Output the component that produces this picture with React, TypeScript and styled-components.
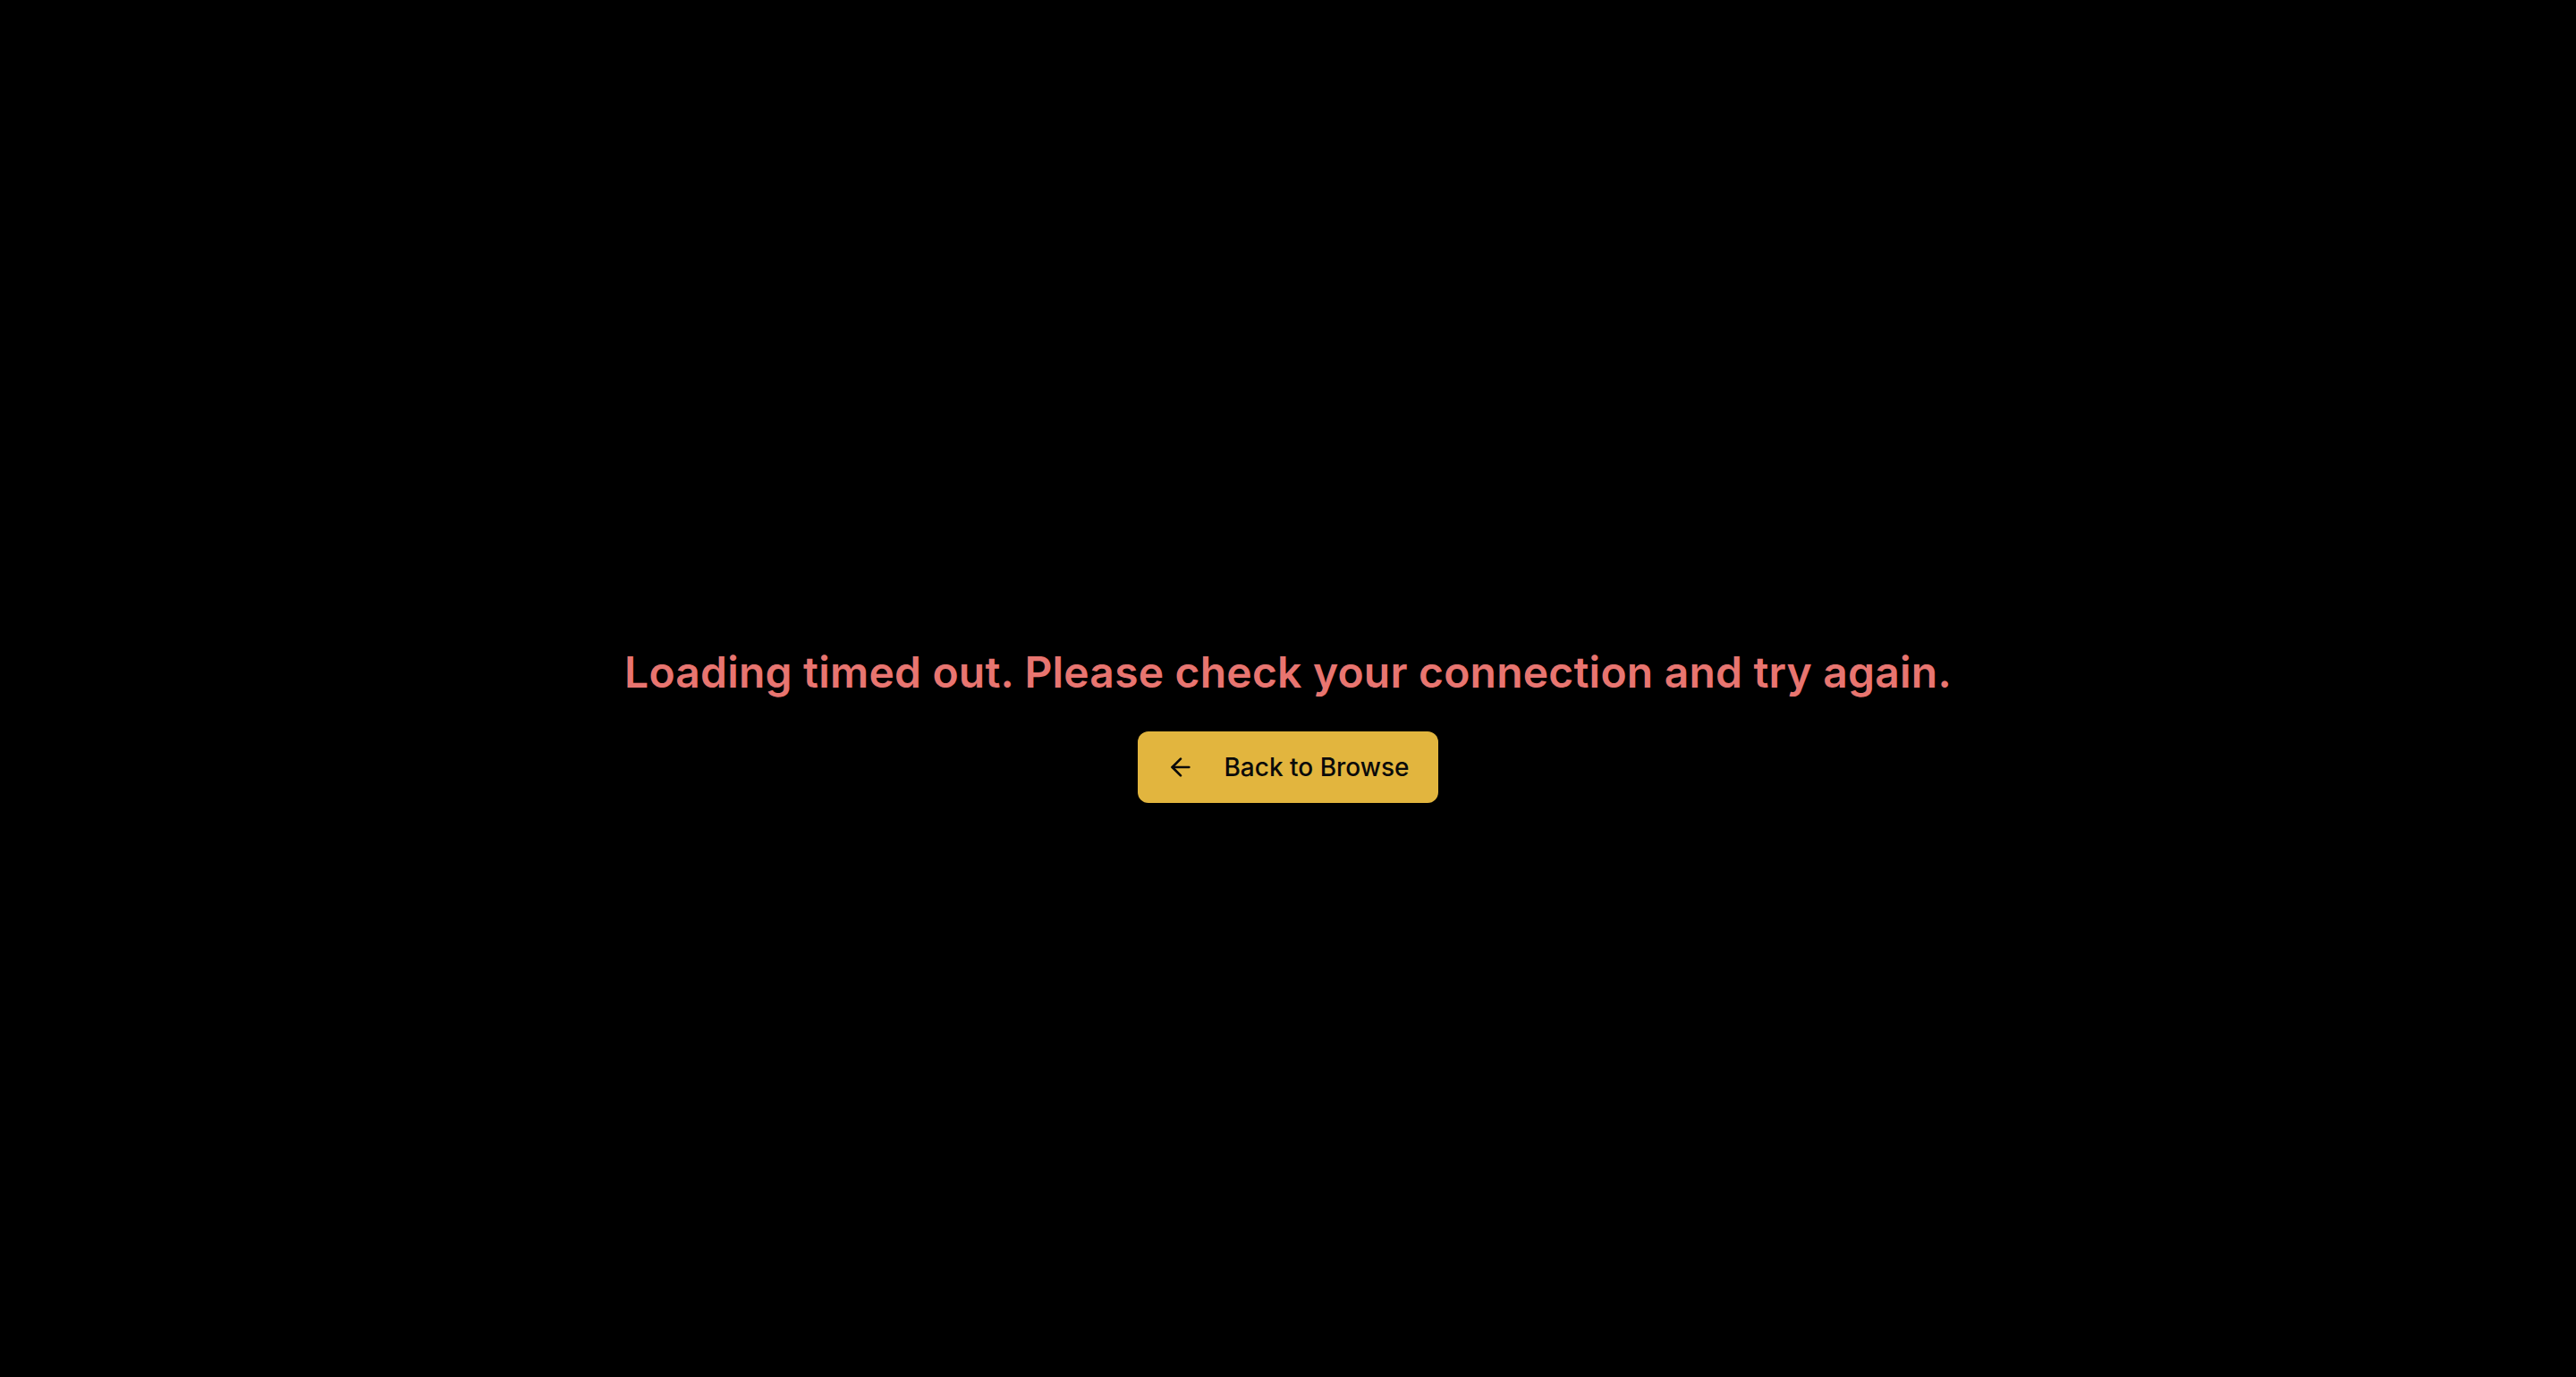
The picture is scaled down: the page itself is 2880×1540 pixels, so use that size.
import React from "react";
import styled, { createGlobalStyle } from "styled-components";

const GlobalStyle = createGlobalStyle`
  html, body {
    margin: 0;
    padding: 0;
    background: #000000;
  }
  body {
    font-family: Inter, "Noto Sans", "Liberation Sans", sans-serif;
  }
  * { box-sizing: border-box; }
`;

const Page = styled.main`
  min-height: 100vh;
  background: #000000;
  display: flex;
  flex-direction: column;
  align-items: center;
  justify-content: center;
  padding-top: 78px;
`;

const Message = styled.h2`
  margin: 0 0 34px 0;
  font-family: Inter, "Noto Sans", sans-serif;
  font-size: 48px;
  line-height: 64px;
  font-weight: 600;
  letter-spacing: 0.2px;
  color: #e87570;
  text-align: center;
`;

const BackButton = styled.button`
  display: inline-flex;
  align-items: center;
  gap: 32px;
  height: 80px;
  padding: 0 32px;
  border: none;
  outline: none;
  border-radius: 12px;
  background: #e2b53e;
  color: #0a0a0a;
  font-family: Inter, "Noto Sans", sans-serif;
  font-size: 28px;
  font-weight: 500;
  line-height: 40px;
  cursor: pointer;
`;

const ArrowIcon = () => (
  <svg
    width="32"
    height="32"
    viewBox="0 0 24 24"
    fill="none"
    stroke="currentColor"
    strokeWidth="2"
    strokeLinecap="round"
    strokeLinejoin="round"
  >
    <path d="m12 19-7-7 7-7" />
    <path d="M19 12H5" />
  </svg>
);

export default function App() {
  return (
    <>
      <GlobalStyle />
      <Page>
        <Message>Loading timed out. Please check your connection and try again.</Message>
        <BackButton>
          <ArrowIcon />
          Back to Browse
        </BackButton>
      </Page>
    </>
  );
}
